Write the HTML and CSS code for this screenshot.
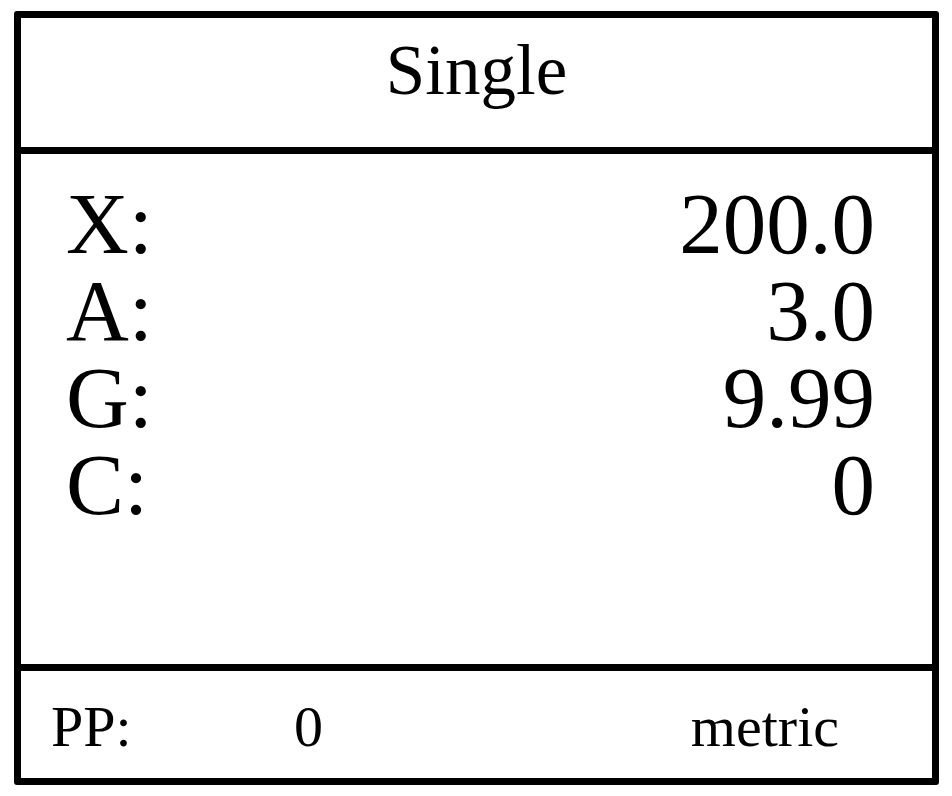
FILE: index.html
```html
<!DOCTYPE html>
<html lang="en">
<head>
    <meta charset="UTF-8">
    <meta name="viewport" content="width=device-width, initial-scale=1.0">
    <title>Single</title>
    <link rel="stylesheet" href="styles.css">
</head>
<body>
    <div class="panel">
        <div class="panel-head">Single</div>
        <div class="panel-body">
            <div class="row"><span>X:</span><span>200.0</span></div>
            <div class="row"><span>A:</span><span>3.0</span></div>
            <div class="row"><span>G:</span><span>9.99</span></div>
            <div class="row"><span>C:</span><span>0</span></div>
        </div>
        <div class="panel-foot">
            <span>PP:</span>
            <span>0</span>
            <span>metric</span>
        </div>
    </div>
</body>
</html>
```

FILE: styles.css
```css
*{
    margin: 0;
    padding: 0;
    box-sizing: border-box;
}
body{
    margin: 11px 13px 0 14px;
    background-color: #fff;
    color: #000;
    font-family: "Liberation Serif", "Times New Roman", serif;
}
.panel{
    width: 925px;
    border: 7px solid #000;
    border-radius: 3px;
}
.panel-head{
    height: 136px;
    padding-top: 13px;
    border-bottom: 7px solid #000;
    font-size: 71px;
    line-height: 1.1;
    text-align: center;
}
.panel-body{
    height: 517px;
    padding: 26px 57px 0 45px;
    border-bottom: 7px solid #000;
    font-size: 87px;
    line-height: 87px;
}
.row{
    display: flex;
    justify-content: space-between;
}
.panel-foot{
    height: 107px;
    padding: 24px 93px 0 30px;
    display: grid;
    grid-template-columns: 243px 1fr auto;
    font-size: 58px;
    line-height: 64px;
}
```
